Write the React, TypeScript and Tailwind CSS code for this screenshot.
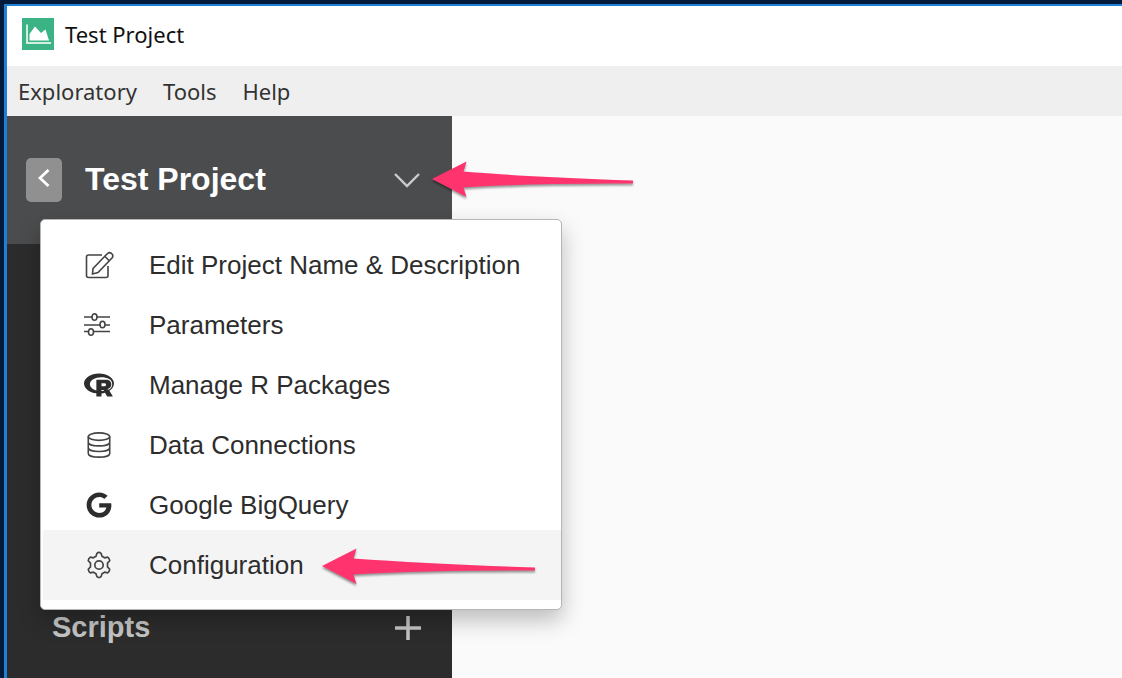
import type { ReactNode } from "react";
import { FaGoogle, FaRProject } from "react-icons/fa";

function AppLogo() {
  return (
    <svg viewBox="0 0 32 32" className="size-8 shrink-0" aria-hidden="true">
      <rect width="32" height="32" fill="#3cb385" />
      <path d="M5 6.500v18.500H29" fill="none" stroke="#d3efe3" strokeWidth="2" />
      <path d="M7.500 22.500V16L13 8.500l6 6.500 4.500-3.500L27 22.500z" fill="#fff" />
    </svg>
  );
}

function EditIcon() {
  return (
    <svg viewBox="0 0 30 30" className="size-[30px]" fill="none" stroke="#444" strokeWidth="1.6" aria-hidden="true">
      <path d="M18 5H4.500a2 2 0 0 0-2 2v18.500a2 2 0 0 0 2 2h17.500a2 2 0 0 0 2-2V16" />
      <path d="M9 18.500 23.500 3.500a3.200 3.200 0 0 1 4.500 4.500L14 22.500l-5.500 1.500z M21 6.500l4.500 4.500" />
    </svg>
  );
}

function SlidersIcon() {
  return (
    <svg viewBox="0 0 30 30" className="size-[30px]" fill="none" stroke="#444" strokeWidth="1.6" aria-hidden="true">
      <path d="M0 7h8M13 7h13M0 15h16M21 15h5M0 21.500h4.500M9.500 21.500H26" />
      <ellipse cx="10.500" cy="7" rx="2.500" ry="3.300" />
      <ellipse cx="18.500" cy="14.500" rx="2.500" ry="3.300" />
      <ellipse cx="7" cy="22" rx="2.500" ry="3.300" />
    </svg>
  );
}

function DatabaseIcon() {
  return (
    <svg viewBox="0 0 30 30" className="size-7" fill="none" stroke="#444" strokeWidth="1.7" aria-hidden="true">
      <ellipse cx="15" cy="6" rx="11.500" ry="4" />
      <path d="M3.500 6v18c0 5.300 23 5.300 23 0V6M3.500 12c0 5.300 23 5.300 23 0M3.500 18c0 5.300 23 5.300 23 0" />
    </svg>
  );
}

function GearIcon() {
  return (
    <svg viewBox="0 0 30 30" className="size-7" fill="none" stroke="#444" strokeWidth="1.8" strokeLinejoin="round" aria-hidden="true">
      <path d="M12.800 2.500c1.200-1 3.200-1 4.400 0l1 3.200 2.800 1.600 3.300-.7c1.300.9 2.100 2.400 2.200 3.800l-2.400 2.600v4l2.400 2.600c-.1 1.400-.9 2.900-2.200 3.800l-3.300-.7-2.800 1.600-1 3.200c-1.200 1-3.200 1-4.400 0l-1-3.200L9 22.700l-3.300.7c-1.300-.9-2.100-2.400-2.200-3.800L5.900 17v-4l-2.400-2.600c.1-1.400.9-2.900 2.200-3.800l3.300.7 2.800-1.600z" />
      <circle cx="15" cy="15" r="4.500" />
    </svg>
  );
}

const items: { label: string; icon: ReactNode; active?: boolean }[] = [
  { label: "Edit Project Name & Description", icon: <EditIcon /> },
  { label: "Parameters", icon: <SlidersIcon /> },
  { label: "Manage R Packages", icon: <FaRProject className="size-[30px]" /> },
  { label: "Data Connections", icon: <DatabaseIcon /> },
  { label: "Google BigQuery", icon: <FaGoogle className="size-[26px]" /> },
  { label: "Configuration", icon: <GearIcon />, active: true },
];

function Arrow({ length, className }: { length: number; className: string }) {
  return (
    <svg
      width={length}
      height="40"
      className={`pointer-events-none absolute overflow-visible drop-shadow-[0_2px_1px_rgba(0,0,0,0.4)] ${className}`}
      aria-hidden="true"
    >
      <path
        d={`M0 18 34.500 0.500 31.500 10.500Q${length * 0.5} 16 ${length} 19.500V22.500Q${length * 0.5} 22 31.500 26.500L34.500 36z`}
        fill="#ff346f"
      />
    </svg>
  );
}

function ProjectMenu() {
  return (
    <ul className="absolute top-[103px] left-[33px] z-10 w-[522px] rounded-[5px] border border-[#b5b5b5] bg-white pt-5 pb-[9px] pl-[2px] shadow-[0_10px_22px_rgba(0,0,0,0.25)]">
      {items.map((item) => (
        <li key={item.label} className="-mt-[10px]">
          <button
            type="button"
            className={`flex h-[70px] w-full items-center gap-[35px] pl-10 text-left text-[26px] whitespace-nowrap text-[#2d2d2d] ${
              item.active ? "bg-[#f4f4f4]" : ""
            }`}
          >
            <span className="flex w-[31px] justify-center">{item.icon}</span>
            {item.label}
          </button>
        </li>
      ))}
      <Arrow length={213} className="top-[328px] left-[281px]" />
    </ul>
  );
}

export default function App() {
  return (
    <div className="flex min-h-screen flex-col bg-[#021b3a] pt-1 pl-1 font-['Liberation_Sans',Arial,sans-serif]">
      <div className="flex flex-1 flex-col border-t-2 border-l-3 border-[#1f80d4] bg-white">
        <header className="flex h-[60px] items-center gap-[11px] pb-1 pl-[15px] font-['Noto_Sans','Open_Sans',sans-serif] text-[22px] text-[#111]">
          <AppLogo />
          <h1>Test Project</h1>
        </header>
        <nav className="flex h-[50px] items-center gap-[26px] bg-[#efefef] pl-[11px] font-['Noto_Sans','Open_Sans',sans-serif] text-[22px] text-[#333]">
          <button type="button">Exploratory</button>
          <button type="button">Tools</button>
          <button type="button">Help</button>
        </nav>
        <div className="flex flex-1">
          <aside className="relative flex w-[445px] shrink-0 flex-col bg-[#2b2c2b]">
            <div className="flex h-[128px] items-start bg-[#4b4c4d] pt-[42px] pr-[31px] pl-[19px]">
              <button type="button" aria-label="Back" className="flex h-11 w-9 items-center justify-center rounded-[5px] bg-[#909090] pb-1">
                <svg viewBox="0 0 12 18" className="h-[18px] w-3" fill="none" stroke="#fff" strokeWidth="2.800" aria-hidden="true">
                  <path d="M10.500 1 2 9l8.500 8" />
                </svg>
              </button>
              <h2 className="ml-[23px] flex-1 text-[32px] leading-[42px] font-bold whitespace-nowrap text-white">Test Project</h2>
              <button type="button" aria-label="Project menu" className="flex h-11 items-center">
                <svg viewBox="0 0 28 16" className="h-4 w-7" fill="none" stroke="#ccc" strokeWidth="2.400" aria-hidden="true">
                  <path d="M2 2l12 12L26 2" />
                </svg>
              </button>
            </div>
            <div className="mt-auto flex h-[100px] items-center justify-between pr-[30px] pl-[45px] text-[#c4c4c4]">
              <h3 className="text-[29px] font-bold">Scripts</h3>
              <button type="button" aria-label="Add script">
                <svg viewBox="0 0 28 28" className="size-7" fill="none" stroke="currentColor" strokeWidth="3.500" aria-hidden="true">
                  <path d="M14 2v24M1 14h26" />
                </svg>
              </button>
            </div>
            <ProjectMenu />
            <Arrow length={201} className="top-[45px] left-[425px]" />
          </aside>
          <main className="flex-1 bg-[#fafafa]" />
        </div>
      </div>
    </div>
  );
}
